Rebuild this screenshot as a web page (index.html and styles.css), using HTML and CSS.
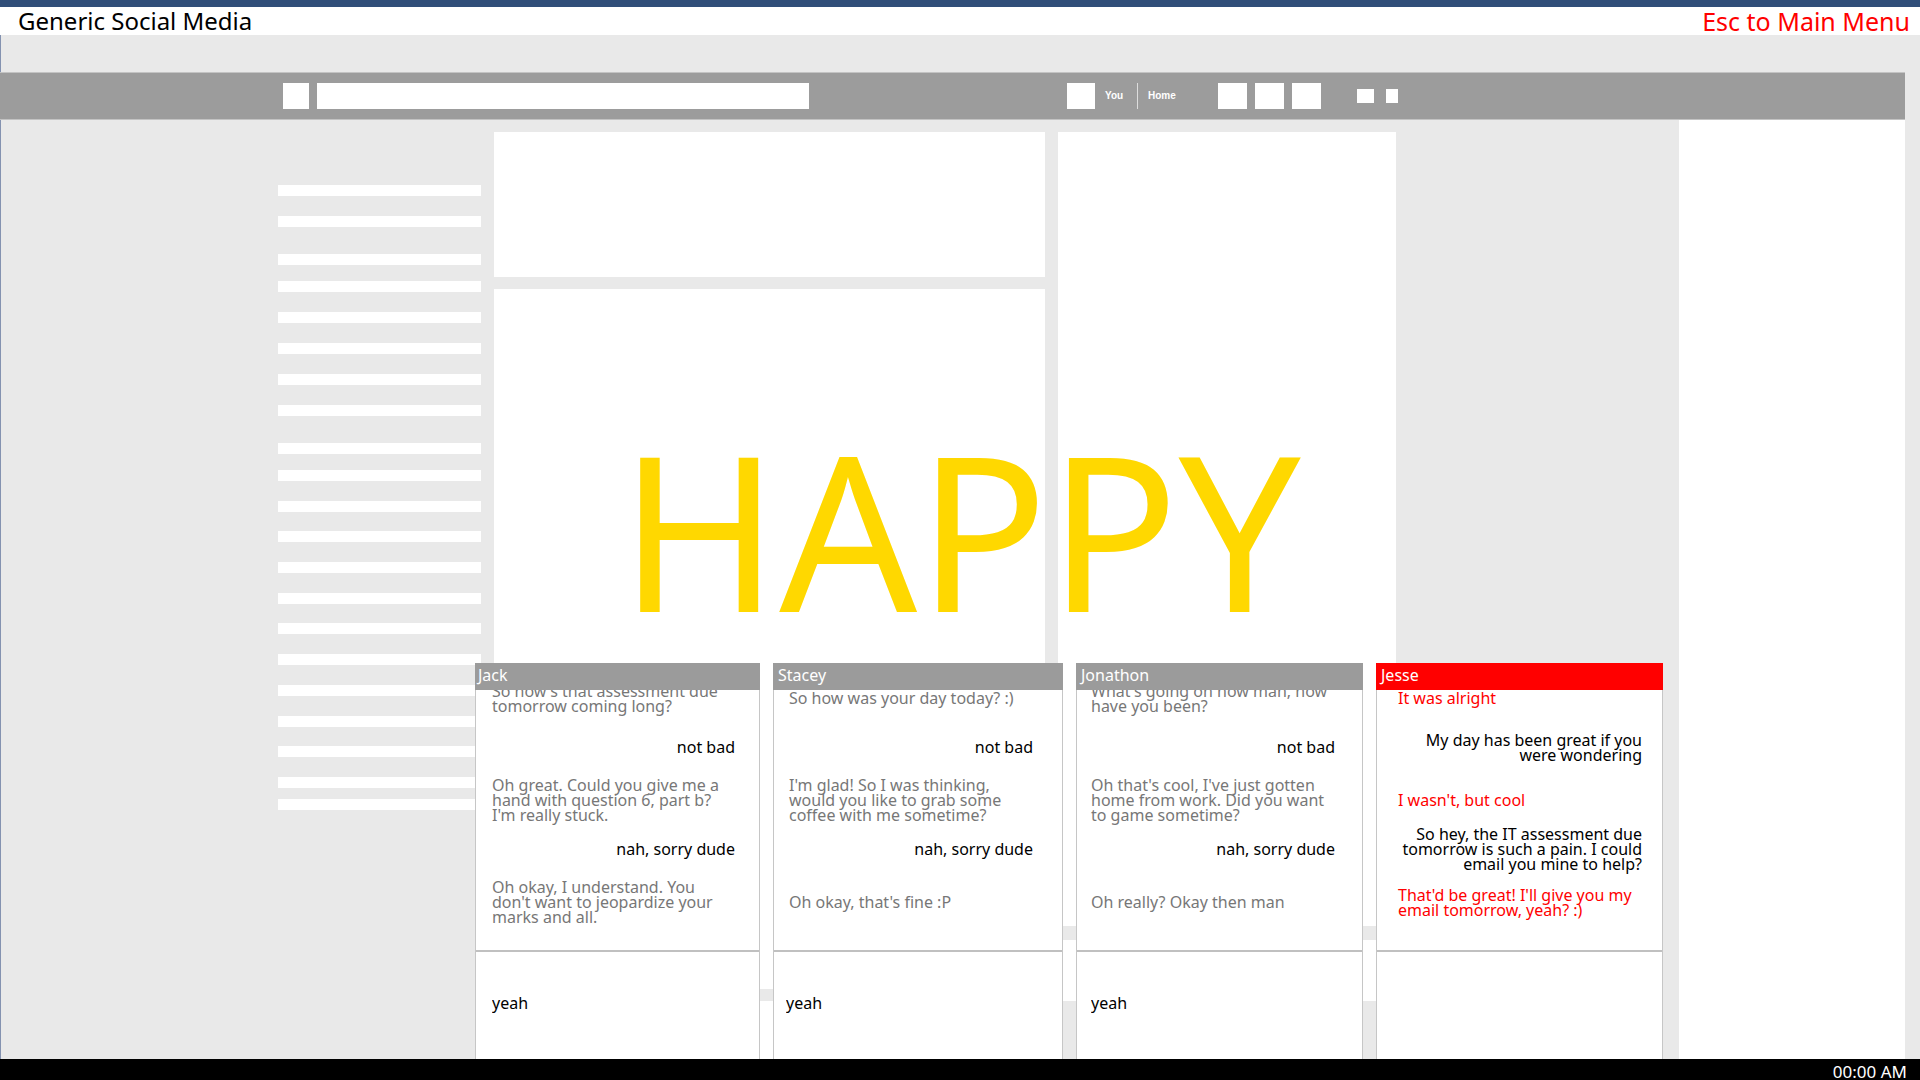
FILE: index.html
```html
<!DOCTYPE html>
<html lang="en">
<head>
<meta charset="utf-8">
<title>Generic Social Media</title>
<link rel="stylesheet" href="styles.css">
</head>
<body>
<div class="screen">
  <header class="titlebar">
    <h1 class="title">Generic Social Media</h1>
    <button class="escape" type="button">Esc to Main Menu</button>
  </header>

  <main class="window">
    <nav class="navbar">
      <a class="tile logo" href="#" aria-label="Logo"></a>
      <input class="search" type="text" aria-label="Search">
      <a class="tile avatar" href="#" aria-label="Profile"></a>
      <a class="navlink you" href="#">You</a>
      <a class="navlink home" href="#">Home</a>
      <div class="alerts">
        <button class="tile alert" type="button" aria-label="Friends"></button>
        <button class="tile alert" type="button" aria-label="Messages"></button>
        <button class="tile alert" type="button" aria-label="Notifications"></button>
      </div>
      <div class="tools">
        <button class="tile privacy" type="button" aria-label="Privacy"></button>
        <button class="tile settings" type="button" aria-label="Settings"></button>
      </div>
    </nav>

    <div class="content">
      <aside class="rail">
        <ul class="lines pair"><li></li><li></li></ul>
        <ul class="lines heading"><li></li></ul>
        <ul class="lines"><li></li><li></li><li></li><li></li><li></li></ul>
        <ul class="lines heading"><li></li></ul>
        <ul class="lines long"><li></li><li></li><li></li><li></li><li></li><li></li><li></li><li></li><li></li><li></li><li></li></ul>
        <ul class="lines last"><li></li></ul>
      </aside>
      <section class="feed">
        <div class="card composer"></div>
        <div class="card post"></div>
        <div class="card next-post"></div>
      </section>
      <section class="side">
        <div class="card trends"></div>
        <div class="card links"></div>
      </section>
      <aside class="ticker"></aside>
    </div>

    <p class="mood">HAPPY</p>

    <div class="dock">
      <section class="chat jack">
        <h2 class="chat-name">Jack</h2>
        <div class="log">
          <p class="msg in">So how's that assessment due<br>tomorrow coming long?</p>
          <p class="msg out">not bad</p>
          <p class="msg in">Oh great. Could you give me a<br>hand with question 6, part b?<br>I'm really stuck.</p>
          <p class="msg out">nah, sorry dude</p>
          <p class="msg in">Oh okay, I understand. You<br>don't want to jeopardize your<br>marks and all.</p>
        </div>
        <input class="reply" type="text" value="yeah" aria-label="Reply to Jack">
      </section>
      <section class="chat stacey">
        <h2 class="chat-name">Stacey</h2>
        <div class="log">
          <p class="msg in">So how was your day today? :)</p>
          <p class="msg out">not bad</p>
          <p class="msg in">I'm glad! So I was thinking,<br>would you like to grab some<br>coffee with me sometime?</p>
          <p class="msg out">nah, sorry dude</p>
          <p class="msg in">Oh okay, that's fine :P</p>
        </div>
        <input class="reply" type="text" value="yeah" aria-label="Reply to Stacey">
      </section>
      <section class="chat jonathon">
        <h2 class="chat-name">Jonathon</h2>
        <div class="log">
          <p class="msg in">What's going on now man, how<br>have you been?</p>
          <p class="msg out">not bad</p>
          <p class="msg in">Oh that's cool, I've just gotten<br>home from work. Did you want<br>to game sometime?</p>
          <p class="msg out">nah, sorry dude</p>
          <p class="msg in">Oh really? Okay then man</p>
        </div>
        <input class="reply" type="text" value="yeah" aria-label="Reply to Jonathon">
      </section>
      <section class="chat jesse">
        <h2 class="chat-name">Jesse</h2>
        <div class="log">
          <p class="msg in">It was alright</p>
          <p class="msg out">My day has been great if you<br>were wondering</p>
          <p class="msg in">I wasn't, but cool</p>
          <p class="msg out">So hey, the IT assessment due<br>tomorrow is such a pain. I could<br>email you mine to help?</p>
          <p class="msg in">That'd be great! I'll give you my<br>email tomorrow, yeah? :)</p>
        </div>
        <input class="reply" type="text" aria-label="Reply to Jesse">
      </section>
    </div>
  </main>

  <footer class="statusbar"><time class="clock">00:00 AM</time></footer>
</div>
</body>
</html>
```
FILE: styles.css
```css
* { box-sizing: border-box; margin: 0; padding: 0; }

body {
  font-family: "Noto Sans", "Open Sans", sans-serif;
  background: #e9e9e9;
  color: #000;
}

button, input {
  border: 0;
  border-radius: 0;
  background: none;
  font: inherit;
  color: inherit;
  outline: 0;
}

a { color: inherit; text-decoration: none; }
ul { list-style: none; }

.screen {
  display: flex;
  flex-direction: column;
  height: 100vh;
  overflow: hidden;
}

/* Title bar */
.titlebar {
  display: flex;
  justify-content: space-between;
  align-items: center;
  height: 35px;
  padding: 0 10px 0 18px;
  border-top: 7px solid #304e79;
  background: #fff;
}

.title { font-size: 24px; font-weight: 400; line-height: 28px; }
.escape { font-size: 25px; line-height: 28px; color: #f00; }

/* Simulated site */
.window {
  position: relative;
  flex: 1;
  min-height: 0;
  display: flex;
  flex-direction: column;
  padding-top: 37px;
  background: #e9e9e9;
  box-shadow: inset 1px 0 #8492b0;
}

.navbar {
  display: flex;
  align-items: center;
  height: 48px;
  margin-right: 15px;
  padding-left: 283px;
  background: #9c9c9c;
  border-top: 1px solid #c3c3c3;
  border-bottom: 1px solid #c3c3c3;
  color: #fff;
}

.tile { display: block; height: 26px; background: #fff; }
.logo { width: 26px; }
.search { width: 492px; height: 26px; margin-left: 8px; background: #fff; color: #000; }
.avatar { width: 28px; margin-left: 258px; }

.navlink {
  font-family: "Liberation Sans", sans-serif;
  font-size: 10px;
  font-weight: 700;
  line-height: 26px;
}
.you { width: 43px; padding-left: 10px; border-right: 1px solid #ddd; }
.home { width: 80px; padding-left: 10px; }

.alerts { display: flex; gap: 8px; }
.alert { width: 29px; }
.tools { display: flex; gap: 12px; margin-left: 36px; }
.privacy { width: 17px; height: 14px; }
.settings { width: 12px; height: 14px; }

.content {
  flex: 1;
  min-height: 0;
  display: grid;
  grid-template-columns: 203px 551fr 339fr 257fr 226px;
  column-gap: 13px;
  padding: 0 15px 0 278px;
}

.rail { padding-top: 65px; }
.lines { display: flex; flex-direction: column; gap: 20px; }
.lines li { height: 11px; background: #fff; }
.heading { padding: 27px 0 16px; }
.long { justify-content: space-between; gap: 0; height: 318px; }
.last { padding-top: 11px; }

.feed, .side {
  display: flex;
  flex-direction: column;
  gap: 12px;
  padding-top: 12px;
}

.card { background: #fff; }
.composer { height: 145px; }
.post { height: 700px; }
.next-post { flex: 1; }
.trends { height: 794px; }
.side { gap: 14px; }
.links { height: 61px; }
.ticker { grid-column: 5; background: #fff; }

/* Big word over the page */
.mood {
  position: absolute;
  top: 383px;
  left: 0;
  right: 0;
  font-size: 216px;
  line-height: 220px;
  text-align: center;
  color: #ffd800;
}

/* Chat windows docked over the bottom edge */
.dock {
  position: absolute;
  left: 475px;
  right: 257px;
  bottom: 0;
  display: grid;
  grid-template-columns: 285fr 290fr 287fr 287fr;
  gap: 13px;
  font-size: 16px;
}

.chat {
  display: flex;
  flex-direction: column;
  height: 396px;
  background: #fff;
  border: solid #c6c6c6;
  border-width: 0 1px;
}

.chat-name {
  height: 27px;
  margin: 0 -1px;
  padding-left: 5px;
  background: #9b9b9b;
  color: #fff;
  font-size: 16px;
  font-weight: 400;
  line-height: 25px;
}

.log {
  flex: 1;
  min-height: 0;
  display: flex;
  flex-direction: column;
  justify-content: flex-end;
  overflow: hidden;
  padding: 0 24px 25px 16px;
  line-height: 15px;
}

.msg {
  flex: none;
  display: grid;
  align-content: center;
  height: 45px;
  white-space: nowrap;
}

.in { margin-top: 8px; color: #777; }
.out { margin-top: 4px; text-align: right; }

.reply {
  width: 100%;
  height: 109px;
  padding: 0 16px 6px;
  border-top: 2px solid #c0c0c0;
}

.jack .chat-name { padding-left: 3px; }
.stacey .log { padding-left: 15px; padding-right: 29px; }
.stacey .reply { padding-left: 12px; }
.jonathon .log { padding-left: 14px; padding-right: 27px; }
.jonathon .reply { padding-left: 14px; }
.jesse .chat-name { background: #f00; }
.jesse .log { padding-left: 21px; padding-right: 20px; }
.jesse .in { color: #f00; }

/* Status bar */
.statusbar {
  display: flex;
  justify-content: flex-end;
  align-items: flex-end;
  height: 21px;
  padding-right: 13px;
  background: #000;
  color: #fff;
  font-size: 17px;
  line-height: 17px;
}
```
